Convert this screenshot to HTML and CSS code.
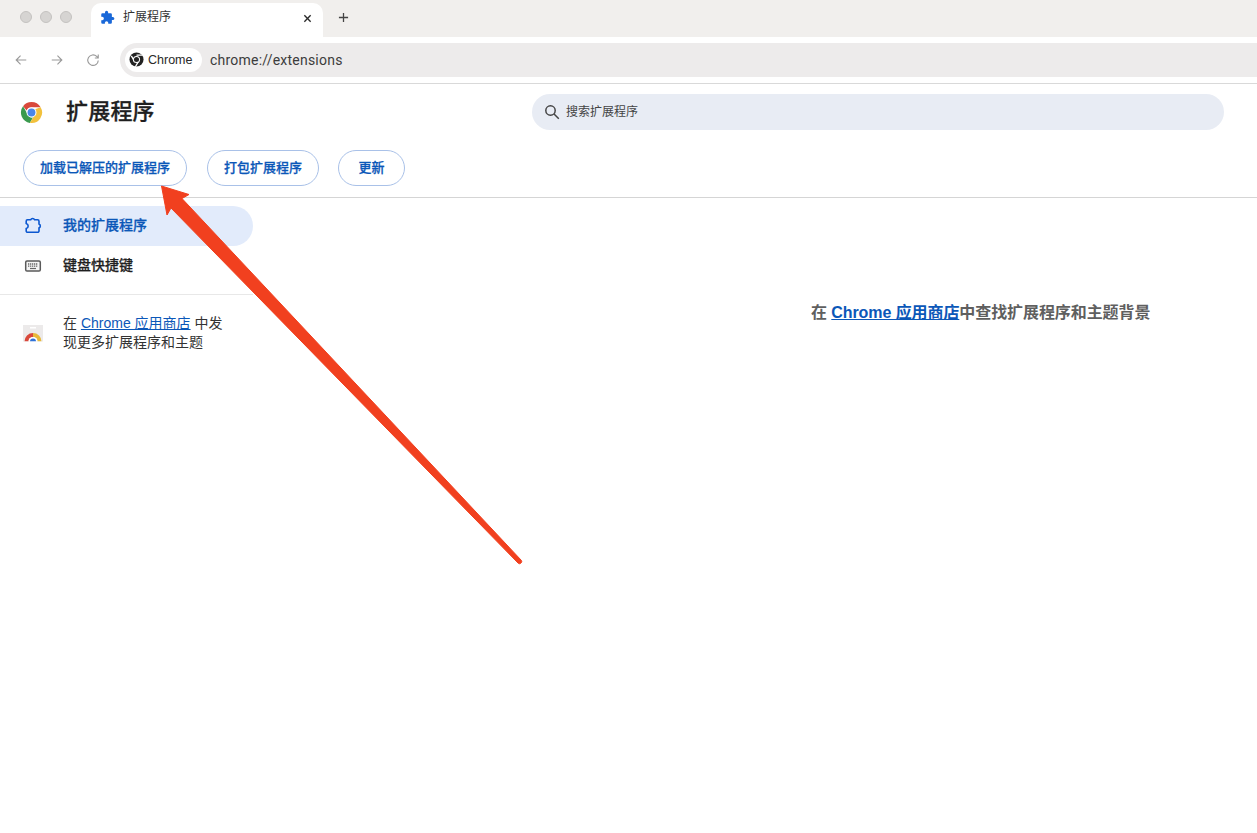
FILE: index.html
```html
<!DOCTYPE html>
<html lang="zh-CN">
<head>
<meta charset="utf-8">
<title>扩展程序</title>
<link rel="stylesheet" href="styles.css">
</head>
<body>
<div class="tabstrip">
  <div class="lights"><span class="light"></span><span class="light"></span><span class="light"></span></div>
  <div class="tab">
    <svg class="tab-icon" viewBox="0 0 24 24"><path fill="#1a68d8" d="M20.500 11H19V7a2 2 0 0 0-2-2h-4V3.500a2.500 2.500 0 0 0-5 0V5H4a2 2 0 0 0-2 2v3.800h1.500a2.700 2.700 0 0 1 0 5.400H2V20a2 2 0 0 0 2 2h3.800v-1.500a2.700 2.700 0 0 1 5.400 0V22H17a2 2 0 0 0 2-2v-4h1.500a2.500 2.500 0 0 0 0-5z"/></svg>
    <span class="tab-title">扩展程序</span>
    <svg class="tab-close" viewBox="0 0 10 10"><path d="M1.500 1.500l7 7M8.500 1.500l-7 7" stroke="#2b2b2b" stroke-width="1.500" fill="none"/></svg>
  </div>
  <svg class="new-tab" viewBox="0 0 12 12"><path d="M6 1v10M1 6h10" stroke="#444" stroke-width="1.400" fill="none"/></svg>
</div>
<div class="toolbar">
  <svg class="nav-icon" viewBox="0 0 16 16"><path d="M14 8H2.500M7.500 3L2.500 8l5 5" stroke="#9a9a9a" stroke-width="1.300" fill="none"/></svg>
  <svg class="nav-icon" viewBox="0 0 16 16"><path d="M2 8h11.500M8.500 3l5 5-5 5" stroke="#9a9a9a" stroke-width="1.300" fill="none"/></svg>
  <svg class="nav-icon" viewBox="0 0 16 16"><path d="M14 8.500A6 6 0 1 1 12.200 3.900L14 5.700M14 1.800v3.900H10.100" stroke="#9a9a9a" stroke-width="1.300" fill="none"/></svg>
  <div class="omnibox">
    <div class="chip">
      <svg class="chip-icon" viewBox="0 0 16 16">
        <circle cx="8" cy="8" r="7.500" fill="#222"/>
        <path d="M8 3.400h6.400M5.900 10L2.500 4.200M10.100 10l-3.300 5.700" stroke="#fff" stroke-width="1.400" fill="none"/>
        <circle cx="8" cy="8" r="3.800" fill="#fff"/><circle cx="8" cy="8" r="2.700" fill="#222"/>
      </svg>
      <span class="chip-text">Chrome</span>
    </div>
    <span class="url">chrome://extensions</span>
  </div>
</div>
<div class="page">
  <header class="head">
    <svg class="logo" viewBox="0 0 24 24">
      <path fill="#d9483b" d="M12 1a11 11 0 0 1 9.530 5.500H12a5.500 5.500 0 0 0-5.100 3.400L3.200 5.400A11 11 0 0 1 12 1z"/>
      <path fill="#3a9a4e" d="M3.200 5.400l4.800 8.300a5.500 5.500 0 0 0 5.500 3.600l-3.200 5.600A11 11 0 0 1 3.200 5.400z"/>
      <path fill="#f2c13c" d="M21.530 6.500A11 11 0 0 1 10.300 22.900l4.500-7.400a5.500 5.500 0 0 0 .9-7z"/>
      <circle cx="12" cy="12" r="5.200" fill="#fff"/><circle cx="12" cy="12" r="4.100" fill="#4a86e8"/>
    </svg>
    <h1 class="title">扩展程序</h1>
    <div class="search">
      <svg class="search-icon" viewBox="0 0 16 16"><circle cx="6.500" cy="6.500" r="4.700" stroke="#444" stroke-width="1.500" fill="none"/><path d="M10 10l4.800 4.800" stroke="#444" stroke-width="1.500"/></svg>
      <span class="search-text">搜索扩展程序</span>
    </div>
  </header>
  <div class="actions">
    <button class="btn btn-load">加载已解压的扩展程序</button>
    <button class="btn btn-pack">打包扩展程序</button>
    <button class="btn btn-update">更新</button>
  </div>
  <div class="content">
    <nav class="side">
      <a class="side-item active">
        <svg class="side-icon" viewBox="0 0 18 18"><path d="M3.500 2.800h3.200a2.100 2.100 0 0 1 3.900 0h3a1.400 1.400 0 0 1 1.400 1.400v2.800a2.100 2.100 0 0 1 0 3.900v3a1.400 1.400 0 0 1-1.400 1.400H3.600a1.400 1.400 0 0 1-1.400-1.400v-2.300a2.700 2.700 0 0 0 0-5.200V4.200a1.400 1.400 0 0 1 1.300-1.400z" stroke="#0b57d0" stroke-width="1.600" fill="none"/></svg>
        <span>我的扩展程序</span>
      </a>
      <a class="side-item">
        <svg class="side-icon" viewBox="0 0 18 18"><rect x="1.700" y="4" width="14.600" height="10" rx="1.300" stroke="#5a5a5a" stroke-width="1.500" fill="#f4f4f4"/><path d="M4 7h10M4 9.200h10" stroke="#666" stroke-width="1.300" stroke-dasharray="1.300 .7"/><path d="M6 11.500h6" stroke="#666" stroke-width="1.200"/></svg>
        <span>键盘快捷键</span>
      </a>
      <div class="side-line"></div>
      <div class="promo">
        <svg class="promo-icon" viewBox="0 0 20 20">
          <rect x="0" y="0" width="20" height="20" fill="#eceaea"/>
          <rect x="7" y="2" width="6" height="1.500" fill="#fff"/>
          <path d="M1.500 16.500a8.500 8.500 0 0 1 8.500-8.500v4a4.500 4.500 0 0 0-4.500 4.500z" fill="#d9483b"/>
          <path d="M10 8a8.500 8.500 0 0 1 8.500 8.500h-4a4.500 4.500 0 0 0-4.500-4.500z" fill="#e8b93a"/>
          <path d="M5.500 16.500a4.500 4.500 0 0 1 9 0z" fill="#fff"/>
          <path d="M7 16.500a3 3 0 0 1 6 0z" fill="#2f72d8"/>
          <rect x="0" y="16.500" width="20" height="3.500" fill="#fff"/>
        </svg>
        <p class="promo-text">在 <a class="link">Chrome 应用商店</a> 中发现更多扩展程序和主题</p>
      </div>
    </nav>
    <main class="main">
      <p class="empty">在 <a class="link">Chrome 应用商店</a>中查找扩展程序和主题背景</p>
    </main>
  </div>
</div>
<svg class="arrow" viewBox="0 0 1257 833"><path fill="#f1401f" stroke="#f1401f" stroke-width="1" stroke-linejoin="round" d="M161.500 186L189 194.500 182 198.500 521 560a2 2 0 0 1-3 3L171 208 167 215z"/></svg>
</body>
</html>
```
FILE: styles.css
```css
* { box-sizing: border-box; }
html, body { margin: 0; height: 100%; overflow: hidden; }
body {
  background: #fff;
  color: #1f1f1f;
  font-family: "Liberation Sans", "Noto Sans CJK SC", sans-serif;
  position: relative;
}
.tabstrip {
  height: 37px;
  background: #f1efed;
  display: flex;
  align-items: flex-end;
}
.lights { display: flex; gap: 8px; padding-left: 20px; width: 91px; align-self: center; margin-top: -3px; }
.light { width: 12px; height: 12px; border-radius: 50%; background: #d6d4d2; border: 1px solid #c4c2c0; }
.tab {
  width: 232px;
  height: 34px;
  background: #fff;
  border-radius: 10px 10px 0 0;
  display: flex;
  align-items: center;
  padding: 0 9px 3px 9px;
}
.tab-icon { width: 15px; height: 15px; margin-bottom: 2px; }
.tab-title { font-size: 12px; line-height: 14px; margin: 0 0 3px 8px; flex: 1; color: #333; }
.tab-close { width: 9px; height: 9px; margin-right: 2px; }
.new-tab { width: 11px; height: 11px; margin: 0 0 14px 15px; }
.toolbar {
  height: 47px;
  border-bottom: 1px solid #d9d9d9;
  display: flex;
  align-items: center;
  padding: 0 0 0 14px;
}
.nav-icon { width: 14px; height: 14px; margin-right: 22px; }
.nav-icon:nth-child(3) { margin-right: 20px; }
.omnibox {
  flex: 1;
  height: 34px;
  margin-top: -1px;
  background: #edebeb;
  border-radius: 17px 0 0 17px;
  display: flex;
  align-items: center;
  padding-left: 5px;
}
.chip {
  height: 24px;
  width: 77px;
  background: #fff;
  border-radius: 12px;
  display: flex;
  align-items: center;
  padding-left: 4px;
}
.chip-icon { width: 15px; height: 15px; }
.chip-text { font-size: 12.500px; margin-left: 4px; color: #2a2a2a; }
.url { font-family: Roboto, "Liberation Sans", sans-serif; font-size: 14px; margin-left: 8px; color: #3c3c3c; letter-spacing: .22px; }
.head {
  height: 58px;
  display: flex;
  align-items: center;
  padding-left: 20px;
}
.logo { width: 23px; height: 23px; margin-top: -1px; }
.title { font-size: 22px; font-weight: 500; -webkit-text-stroke: .3px #1f1f1f; letter-spacing: .2px; margin: -2px 0 0 23px; width: 466px; line-height: 28px; color: #1f1f1f; }
.search {
  width: 692px;
  height: 36px;
  margin-top: -3px;
  background: #e8ecf4;
  border-radius: 18px;
  display: flex;
  align-items: center;
  padding-left: 12px;
}
.search-icon { width: 16px; height: 16px; }
.search-text { font-size: 12px; line-height: 14px; margin-left: 6px; color: #444; }
.actions {
  height: 56px;
  border-bottom: 1px solid #d5d5d5;
  display: flex;
  gap: 19px;
  align-items: flex-start;
  padding: 8px 0 0 23px;
}
.btn {
  height: 36px;
  border: 1px solid #a9c1e8;
  border-radius: 18px;
  background: #fff;
  color: #0b57b8;
  font: 500 13px/16px "Liberation Sans", "Noto Sans CJK SC", sans-serif;
  -webkit-text-stroke: .25px #0b57b8;
  padding: 0;
}
.btn-load { width: 164px; margin-right: 1px; }
.btn-pack { width: 112px; }
.btn-update { width: 67px; }
.content { display: flex; padding-top: 8px; }
.side { width: 253px; flex: none; }
.side-item {
  height: 40px;
  display: flex;
  align-items: center;
  padding: 0 0 1px 24px;
  font-size: 14px;
  line-height: 16px;
  font-weight: 500;
  color: #1f1f1f;
  border-radius: 0 20px 20px 0;
}
.side-item span { margin-bottom: 1px; -webkit-text-stroke: .25px currentColor; }
.side-item.active { background: #e2ebfb; color: #0b57b8; }
.side-icon { width: 18px; height: 18px; margin-right: 21px; }
.side-line { height: 1px; background: #e8e8e8; margin-top: 8px; }
.promo { display: flex; align-items: center; padding: 19px 22px 0 23px; }
.promo-icon { width: 20px; height: 20px; flex: none; margin-right: 20px; margin-top: 3px; }
.promo-text { margin: 0; font-size: 14px; line-height: 19px; color: #333; }
.link { color: #0b57b8; text-decoration: underline; }
.main { flex: 1; padding: 97px 0 0 558px; }
.empty { margin: 0; font-size: 16px; font-weight: 700; letter-spacing: -.08px; line-height: 20px; color: #5f5f5f; white-space: nowrap; }
.arrow { position: absolute; left: 0; top: 0; width: 1257px; height: 833px; pointer-events: none; }
```
